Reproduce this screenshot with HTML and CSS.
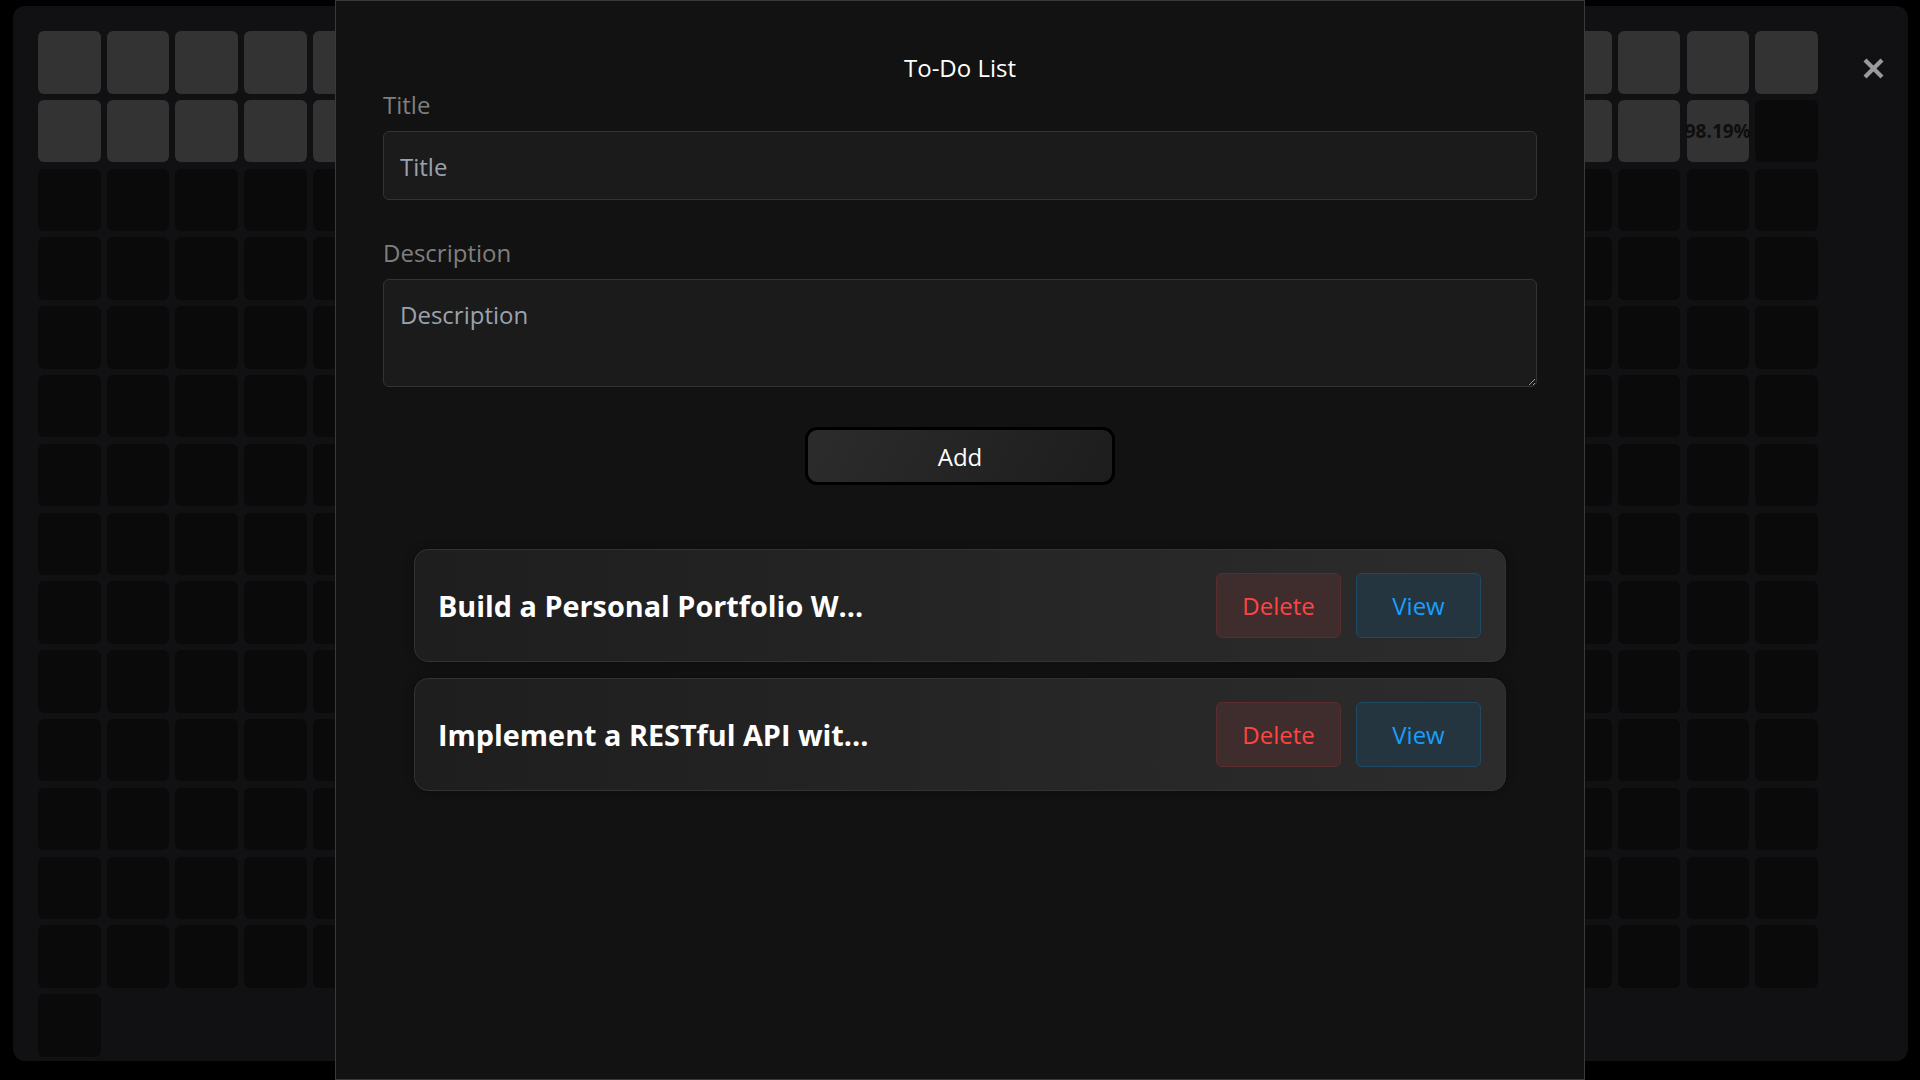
FILE: index.html
```html
<!DOCTYPE html>
<html lang="en">
<head>
<meta charset="utf-8">
<title>To-Do List</title>
<link rel="stylesheet" href="styles.css">
</head>
<body>
<main class="board">
  <div class="grid">
    <div class="d l"></div><div class="d l"></div><div class="d l"></div><div class="d l"></div><div class="d l"></div><div class="d l"></div><div class="d l"></div><div class="d l"></div><div class="d l"></div><div class="d l"></div><div class="d l"></div><div class="d l"></div><div class="d l"></div><div class="d l"></div><div class="d l"></div><div class="d l"></div><div class="d l"></div><div class="d l"></div><div class="d l"></div><div class="d l"></div><div class="d l"></div><div class="d l"></div><div class="d l"></div><div class="d l"></div><div class="d l"></div><div class="d l"></div>
    <div class="d l"></div><div class="d l"></div><div class="d l"></div><div class="d l"></div><div class="d l"></div><div class="d l"></div><div class="d l"></div><div class="d l"></div><div class="d l"></div><div class="d l"></div><div class="d l"></div><div class="d l"></div><div class="d l"></div><div class="d l"></div><div class="d l"></div><div class="d l"></div><div class="d l"></div><div class="d l"></div><div class="d l"></div><div class="d l"></div><div class="d l"></div><div class="d l"></div><div class="d l"></div><div class="d l"></div><div class="d l pct">98.19%</div><div class="d"></div>
    <div class="d"></div><div class="d"></div><div class="d"></div><div class="d"></div><div class="d"></div><div class="d"></div><div class="d"></div><div class="d"></div><div class="d"></div><div class="d"></div><div class="d"></div><div class="d"></div><div class="d"></div><div class="d"></div><div class="d"></div><div class="d"></div><div class="d"></div><div class="d"></div><div class="d"></div><div class="d"></div><div class="d"></div><div class="d"></div><div class="d"></div><div class="d"></div><div class="d"></div><div class="d"></div>
    <div class="d"></div><div class="d"></div><div class="d"></div><div class="d"></div><div class="d"></div><div class="d"></div><div class="d"></div><div class="d"></div><div class="d"></div><div class="d"></div><div class="d"></div><div class="d"></div><div class="d"></div><div class="d"></div><div class="d"></div><div class="d"></div><div class="d"></div><div class="d"></div><div class="d"></div><div class="d"></div><div class="d"></div><div class="d"></div><div class="d"></div><div class="d"></div><div class="d"></div><div class="d"></div>
    <div class="d"></div><div class="d"></div><div class="d"></div><div class="d"></div><div class="d"></div><div class="d"></div><div class="d"></div><div class="d"></div><div class="d"></div><div class="d"></div><div class="d"></div><div class="d"></div><div class="d"></div><div class="d"></div><div class="d"></div><div class="d"></div><div class="d"></div><div class="d"></div><div class="d"></div><div class="d"></div><div class="d"></div><div class="d"></div><div class="d"></div><div class="d"></div><div class="d"></div><div class="d"></div>
    <div class="d"></div><div class="d"></div><div class="d"></div><div class="d"></div><div class="d"></div><div class="d"></div><div class="d"></div><div class="d"></div><div class="d"></div><div class="d"></div><div class="d"></div><div class="d"></div><div class="d"></div><div class="d"></div><div class="d"></div><div class="d"></div><div class="d"></div><div class="d"></div><div class="d"></div><div class="d"></div><div class="d"></div><div class="d"></div><div class="d"></div><div class="d"></div><div class="d"></div><div class="d"></div>
    <div class="d"></div><div class="d"></div><div class="d"></div><div class="d"></div><div class="d"></div><div class="d"></div><div class="d"></div><div class="d"></div><div class="d"></div><div class="d"></div><div class="d"></div><div class="d"></div><div class="d"></div><div class="d"></div><div class="d"></div><div class="d"></div><div class="d"></div><div class="d"></div><div class="d"></div><div class="d"></div><div class="d"></div><div class="d"></div><div class="d"></div><div class="d"></div><div class="d"></div><div class="d"></div>
    <div class="d"></div><div class="d"></div><div class="d"></div><div class="d"></div><div class="d"></div><div class="d"></div><div class="d"></div><div class="d"></div><div class="d"></div><div class="d"></div><div class="d"></div><div class="d"></div><div class="d"></div><div class="d"></div><div class="d"></div><div class="d"></div><div class="d"></div><div class="d"></div><div class="d"></div><div class="d"></div><div class="d"></div><div class="d"></div><div class="d"></div><div class="d"></div><div class="d"></div><div class="d"></div>
    <div class="d"></div><div class="d"></div><div class="d"></div><div class="d"></div><div class="d"></div><div class="d"></div><div class="d"></div><div class="d"></div><div class="d"></div><div class="d"></div><div class="d"></div><div class="d"></div><div class="d"></div><div class="d"></div><div class="d"></div><div class="d"></div><div class="d"></div><div class="d"></div><div class="d"></div><div class="d"></div><div class="d"></div><div class="d"></div><div class="d"></div><div class="d"></div><div class="d"></div><div class="d"></div>
    <div class="d"></div><div class="d"></div><div class="d"></div><div class="d"></div><div class="d"></div><div class="d"></div><div class="d"></div><div class="d"></div><div class="d"></div><div class="d"></div><div class="d"></div><div class="d"></div><div class="d"></div><div class="d"></div><div class="d"></div><div class="d"></div><div class="d"></div><div class="d"></div><div class="d"></div><div class="d"></div><div class="d"></div><div class="d"></div><div class="d"></div><div class="d"></div><div class="d"></div><div class="d"></div>
    <div class="d"></div><div class="d"></div><div class="d"></div><div class="d"></div><div class="d"></div><div class="d"></div><div class="d"></div><div class="d"></div><div class="d"></div><div class="d"></div><div class="d"></div><div class="d"></div><div class="d"></div><div class="d"></div><div class="d"></div><div class="d"></div><div class="d"></div><div class="d"></div><div class="d"></div><div class="d"></div><div class="d"></div><div class="d"></div><div class="d"></div><div class="d"></div><div class="d"></div><div class="d"></div>
    <div class="d"></div><div class="d"></div><div class="d"></div><div class="d"></div><div class="d"></div><div class="d"></div><div class="d"></div><div class="d"></div><div class="d"></div><div class="d"></div><div class="d"></div><div class="d"></div><div class="d"></div><div class="d"></div><div class="d"></div><div class="d"></div><div class="d"></div><div class="d"></div><div class="d"></div><div class="d"></div><div class="d"></div><div class="d"></div><div class="d"></div><div class="d"></div><div class="d"></div><div class="d"></div>
    <div class="d"></div><div class="d"></div><div class="d"></div><div class="d"></div><div class="d"></div><div class="d"></div><div class="d"></div><div class="d"></div><div class="d"></div><div class="d"></div><div class="d"></div><div class="d"></div><div class="d"></div><div class="d"></div><div class="d"></div><div class="d"></div><div class="d"></div><div class="d"></div><div class="d"></div><div class="d"></div><div class="d"></div><div class="d"></div><div class="d"></div><div class="d"></div><div class="d"></div><div class="d"></div>
    <div class="d"></div><div class="d"></div><div class="d"></div><div class="d"></div><div class="d"></div><div class="d"></div><div class="d"></div><div class="d"></div><div class="d"></div><div class="d"></div><div class="d"></div><div class="d"></div><div class="d"></div><div class="d"></div><div class="d"></div><div class="d"></div><div class="d"></div><div class="d"></div><div class="d"></div><div class="d"></div><div class="d"></div><div class="d"></div><div class="d"></div><div class="d"></div><div class="d"></div><div class="d"></div>
    <div class="d"></div>
  </div>
</main>

<button class="close" type="button" aria-label="Close">
  <svg viewBox="0 0 21 21" width="21" height="21"><path d="M2 2 L19 19 M19 2 L2 19" stroke="#9a9a9a" stroke-width="4.2" fill="none"/></svg>
</button>

<section class="modal">
  <h1 class="modal-title">To-Do List</h1>
  <form class="form">
    <label class="field-label" for="title">Title</label>
    <input id="title" class="field" type="text" placeholder="Title">
    <label class="field-label desc-label" for="desc">Description</label>
    <textarea id="desc" class="field area" placeholder="Description"></textarea>
    <button type="button" class="add-btn">Add</button>
  </form>
  <ul class="todo-list">
    <li class="todo">
      <span class="todo-title">Build a Personal Portfolio W...</span>
      <div class="actions">
        <button type="button" class="btn btn-delete">Delete</button>
        <button type="button" class="btn btn-view">View</button>
      </div>
    </li>
    <li class="todo">
      <span class="todo-title">Implement a RESTful API wit...</span>
      <div class="actions">
        <button type="button" class="btn btn-delete">Delete</button>
        <button type="button" class="btn btn-view">View</button>
      </div>
    </li>
  </ul>
</section>
</body>
</html>
```

FILE: styles.css
```css
* { box-sizing: border-box; }

html, body {
  margin: 0;
  height: 100%;
}

body {
  background: #000;
  font-family: "Open Sans", "Noto Sans", sans-serif;
  overflow: hidden;
}

/* background heat map */
.board {
  margin: 6px 0 0 13px;
  width: 1895px;
  height: 1055px;
  background: #111113;
  border-radius: 12px;
  padding: 25px 0 0 25px;
}

.grid {
  display: grid;
  grid-template-columns: repeat(26, 62.5px);
  grid-auto-rows: 62.5px;
  column-gap: 6.2px;
  row-gap: 6.3px;
}

.d {
  background: #0a0a0a;
  border-radius: 6px;
}

.l { background: #333333; }

.pct {
  display: flex;
  align-items: center;
  justify-content: center;
  font-size: 19px;
  font-weight: 700;
  color: #0e0e0e;
  white-space: nowrap;
}

.close {
  position: fixed;
  left: 1863px;
  top: 58px;
  width: 21px;
  height: 21px;
  padding: 0;
  border: 0;
  background: none;
  display: block;
}
.close svg { display: block; }

/* modal */
.modal {
  position: fixed;
  top: 0;
  left: 335px;
  width: 1250px;
  height: 1080px;
  background: #121212;
  border: 1px solid #3a3a3a;
  padding: 51px 47px 0;
}

.modal-title {
  margin: 0;
  font-size: 24px;
  font-weight: 400;
  line-height: 32px;
  text-align: center;
  color: #fff;
}

.form {
  display: flex;
  flex-direction: column;
}

.field-label {
  display: block;
  font-size: 24px;
  line-height: 32px;
  color: #7f7f7f;
  margin: 5px 0 10px;
}

.desc-label { margin-top: 37px; }

.field {
  display: block;
  width: 100%;
  height: 69px;
  background: #1b1b1b;
  border: 1px solid #333;
  border-radius: 6px;
  padding: 2px 16px 0;
  font-family: inherit;
  font-size: 24px;
  color: #ddd;
  outline: none;
}

.field::placeholder { color: #9aa2ae; }

.area {
  height: 108px;
  padding: 19px 16px;
  line-height: 32px;
  resize: vertical;
}

.add-btn {
  display: block;
  align-self: center;
  margin-top: 40px;
  width: 310px;
  height: 58px;
  border: 3px solid #000;
  border-radius: 12px;
  background: linear-gradient(120deg, #2c2c2c, #1d1d1d);
  color: #fff;
  font-family: inherit;
  font-size: 24px;
}

/* todo list */
.todo-list {
  list-style: none;
  margin: 64px 31px 0;
  padding: 0;
  display: flex;
  flex-direction: column;
  gap: 16px;
}

.todo {
  height: 113px;
  display: flex;
  align-items: center;
  justify-content: space-between;
  padding: 0 24px 0 23px;
  background: linear-gradient(to right, #1e1e1e, #2c2c2c);
  border: 1px solid #333;
  border-radius: 14px;
  box-shadow: 0 0 10px rgba(0, 0, 0, 0.35);
}

.todo-title {
  font-size: 28.8px;
  font-weight: 700;
  color: #fff;
  white-space: nowrap;
}

.actions {
  display: flex;
  gap: 15px;
}

.btn {
  width: 125px;
  height: 65px;
  border-radius: 6px;
  font-family: inherit;
  font-size: 24px;
  padding: 0;
}

.btn-delete {
  background: #3f2c2d;
  border: 1px solid #5b2d2f;
  color: #ff4444;
}

.btn-view {
  background: #24353f;
  border: 1px solid #1d4a66;
  color: #189eff;
}
```
